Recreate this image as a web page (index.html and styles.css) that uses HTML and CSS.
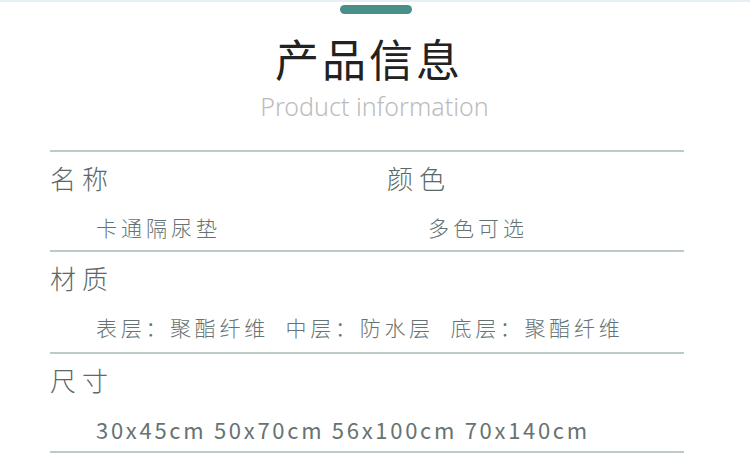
FILE: index.html
```html
<!DOCTYPE html>
<html lang="zh-CN">
<head>
    <meta charset="UTF-8">
    <title>产品信息</title>
    <link rel="stylesheet" href="styles.css">
</head>
<body>

    <header class="title-block">
        <div class="pill"></div>
        <h1>产品信息</h1>
        <p class="subtitle">Product information</p>
    </header>

    <section class="info">
        <div class="row two-col">
            <div class="cell">
                <div class="label">名称</div>
                <div class="value">卡通隔尿垫</div>
            </div>
            <div class="cell">
                <div class="label">颜色</div>
                <div class="value narrow">多色可选</div>
            </div>
        </div>
        <div class="row tall">
            <div class="label">材质</div>
            <div class="value tight">表层：聚酯纤维 &nbsp;中层：防水层 &nbsp;底层：聚酯纤维</div>
        </div>
        <div class="row last">
            <div class="label">尺寸</div>
            <div class="value sizes">30x45cm 50x70cm 56x100cm 70x140cm</div>
        </div>
    </section>

</body>
</html>
```

FILE: styles.css
```css
body {
    margin: 0;
    padding: 0;
    background-color: #fff;
    font-family: "Noto Sans CJK SC", "Noto Sans", sans-serif;
    border-top: 2px solid #e6eff3;
}
.title-block {
    text-align: center;
    padding-top: 3px;
}
.pill {
    width: 72px;
    height: 9px;
    margin-left: 340px;
    border-radius: 5px;
    background-color: #4a8f87;
}
.title-block h1 {
    margin: 19px 0 0 -12px;
    font-size: 44px;
    line-height: 50px;
    font-weight: 400;
    letter-spacing: 3px;
    color: #222;
}
.subtitle {
    margin: 8px 0 0 -1px;
    font-family: "Noto Sans", sans-serif;
    font-size: 25px;
    line-height: 30px;
    font-weight: 300;
    color: #bcbcbc;
}
.info {
    width: 634px;
    margin: 29px 0 0 50px;
    border-bottom: 2px solid #bccaca;
}
.row {
    border-top: 2px solid #bccaca;
    padding: 13px 0 12px 0;
}
.row.tall {
    padding-bottom: 14px;
}
.row.last {
    padding-bottom: 11px;
}
.two-col {
    display: grid;
    grid-template-columns: 337px 1fr;
}
.label {
    font-size: 26px;
    line-height: 26px;
    font-weight: 300;
    color: #5b6969;
    letter-spacing: 6px;
}
.value {
    margin-top: 25px;
    padding-left: 46px;
    font-size: 21px;
    line-height: 22px;
    font-weight: 300;
    color: #667373;
    letter-spacing: 4px;
}
.value.narrow {
    padding-left: 41px;
}
.value.tight {
    letter-spacing: 3.7px;
}
.sizes {
    font-size: 22px;
    font-weight: 400;
    letter-spacing: 2.7px;
}
```
